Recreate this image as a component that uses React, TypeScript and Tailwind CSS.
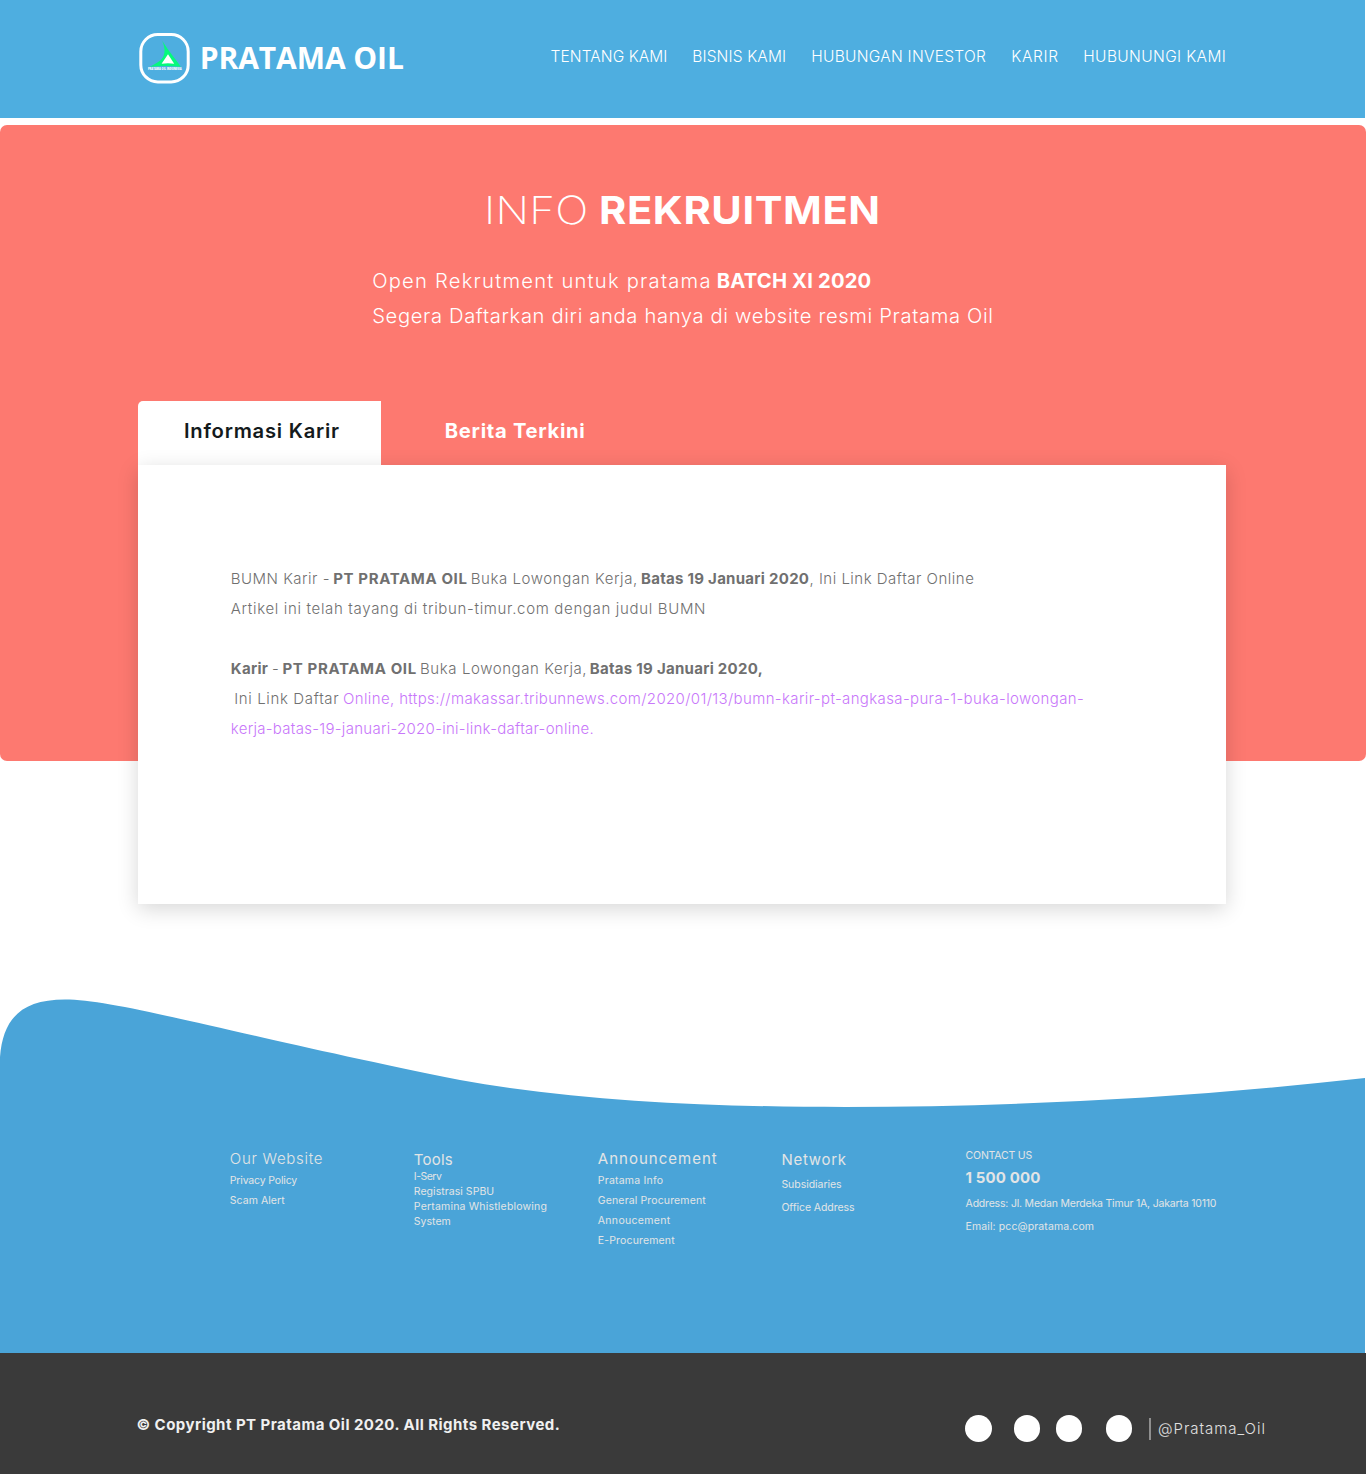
import React from "react";

function Logo() {
  return (
    <svg width="52" height="52" viewBox="0 0 52 52" className="block shrink-0">
      <rect x="2.800" y="2.500" width="47.400" height="47.400" rx="17" fill="none" stroke="#fff" strokeWidth="3" />
      <path
        d="M24 8.5C27.5 14 31 19 34.5 23.5C37.5 27.5 40.5 31 42.700 34.800Q27 33.300 11.500 34.800C18 32 23.500 28.500 25.500 24C27.500 19 26.500 14 24 8.500Z"
        fill="#05f97c"
      />
      <path d="M30 22.3L36.2 31.8Q30 30.8 23.6 31.8Z" fill="#fff" />
      <text
        x="10"
        y="38"
        textLength="33.5"
        lengthAdjust="spacingAndGlyphs"
        fill="#fff"
        className="font-['Open_Sans',sans-serif] text-[3px] font-extrabold"
      >
        PRATAMA OIL INDONESIA
      </text>
    </svg>
  );
}

function Header() {
  return (
    <header className="flex h-[118px] w-[1365px] items-start bg-[#4eaee0] pl-[138px] text-white">
      <a className="mt-[32px] flex w-[412.6px] items-start">
        <Logo />
        <span className="ml-[9.7px] mt-[5px] whitespace-nowrap font-['Open_Sans',sans-serif] text-[30px] font-bold leading-[42px] tracking-[-0.07px]">
          PRATAMA OIL
        </span>
      </a>
      <nav className="mt-[46px] grid grid-cols-[141.7px_119px_200px_72px_auto] whitespace-nowrap text-[15.5px] font-light leading-[22px]">
        <a className="tracking-[0.08px]">TENTANG KAMI</a>
        <a className="tracking-[0.14px]">BISNIS KAMI</a>
        <a className="tracking-[0.27px]">HUBUNGAN INVESTOR</a>
        <a className="tracking-[0.65px]">KARIR</a>
        <a className="tracking-[0.37px]">HUBUNUNGI KAMI</a>
      </nav>
    </header>
  );
}

function Article() {
  return (
    <article className="relative h-[439px] w-[1088px] whitespace-nowrap bg-white pl-[92.8px] pt-[99px] text-[15px] font-light leading-[30px] text-[#707070] shadow-[0_5px_20px_rgba(0,0,0,0.16)]">
      <p className="flex">
        <span className="tracking-[0.49px]">BUMN Karir -</span>
        <b className="ml-[3.2px] font-bold tracking-[0.63px]">PT PRATAMA OIL</b>
        <span className="ml-[3.1px] tracking-[0.59px]">Buka Lowongan Kerja,</span>
        <b className="ml-[3.1px] font-bold tracking-[0.28px]">Batas 19 Januari 2020</b>
        <span className="ml-[0.2px] tracking-[0.5px]">, Ini Link Daftar Online</span>
      </p>
      <p className="tracking-[0.665px]">Artikel ini telah tayang di tribun-timur.com dengan judul BUMN</p>
      <p className="mt-[30px] flex">
        <b className="font-bold tracking-[0.303px]">Karir</b>
        <span className="w-[14.2px] text-center">-</span>
        <b className="font-bold tracking-[0.63px]">PT PRATAMA OIL</b>
        <span className="ml-[3.2px] tracking-[0.59px]">Buka Lowongan Kerja,</span>
        <b className="ml-[2.6px] font-bold tracking-[0.28px]">Batas 19 Januari 2020,</b>
      </p>
      <p className="ml-[3.4px] flex">
        <span className="tracking-[0.64px]">Ini Link Daftar</span>
        <a className="ml-[3.8px] tracking-[0.364px] text-[#c877fa]">
          Online, https://makassar.tribunnews.com/2020/01/13/bumn-karir-pt-angkasa-pura-1-buka-lowongan-
        </a>
      </p>
      <p>
        <a className="tracking-[0.28px] text-[#c877fa]">kerja-batas-19-januari-2020-ini-link-daftar-online.</a>
      </p>
    </article>
  );
}

function Hero() {
  return (
    <main className="mt-[7px] h-[636px] rounded-[7px] bg-[#fd7970] pt-[61px] text-white">
      <h1 className="ml-[484px] flex whitespace-nowrap text-[38.5px] leading-[48px]">
        <span className="origin-left scale-x-[1.14] font-extralight tracking-[0.2px]">INFO</span>
        <b className="ml-[23.7px] origin-left scale-x-[1.08] font-bold tracking-[0.59px]">REKRUITMEN</b>
      </h1>
      <div className="ml-[372.2px] mt-[29px] whitespace-nowrap text-[20.2px] font-light leading-[35px]">
        <p className="flex">
          <span className="w-[344.6px] tracking-[1.22px]">Open Rekrutment untuk pratama</span>
          <b className="font-bold tracking-[0.18px]">BATCH XI 2020</b>
        </p>
        <p className="tracking-[0.635px]">Segera Daftarkan diri anda hanya di website resmi Pratama Oil</p>
      </div>
      <div className="ml-[138px] mt-[67.5px]">
        <div className="flex whitespace-nowrap text-[20.2px] leading-[24px]">
          <button className="flex h-[64.5px] w-[243px] rounded-tl-[5px] bg-white pl-[46px] pt-[18.5px] font-semibold leading-[24px] tracking-[0.77px] text-[#141a1c]">
            Informasi Karir
          </button>
          <button className="flex pl-[63.8px] pt-[18.5px] font-bold leading-[24px] tracking-[0.7px]">Berita Terkini</button>
        </div>
        <Article />
      </div>
    </main>
  );
}

function FooterLinks() {
  return (
    <div className="h-[242px] w-[1365px] bg-[#4aa4d8] pl-[229.8px] pt-[33px]">
      <div className="grid grid-cols-[184px_184px_183.6px_184.2px_auto] items-start whitespace-nowrap text-[10.5px] text-[#e2e4e6]">
        <section className="mt-[4px] leading-[20px]">
          <h2 className="mb-px text-[15px] font-light leading-[22px] tracking-[0.72px]">Our Website</h2>
          <p className="tracking-[-0.16px]">Privacy Policy</p>
          <p className="tracking-[0.054px]">Scam Alert</p>
        </section>
        <section className="mt-[7px] leading-[15px]">
          <h2 className="text-[15px] leading-[18px] tracking-[0.2px]">Tools</h2>
          <p className="tracking-[-0.485px]">I-Serv</p>
          <p className="tracking-[0.044px]">Registrasi SPBU</p>
          <p className="tracking-[0.195px]">Pertamina Whistleblowing</p>
          <p className="tracking-[0.033px]">System</p>
        </section>
        <section className="mt-[4px] leading-[20px]">
          <h2 className="mb-px text-[15px] leading-[22px] tracking-[1.01px]">Announcement</h2>
          <p className="tracking-[0.21px]">Pratama Info</p>
          <p className="tracking-[0.137px]">General Procurement</p>
          <p className="tracking-[0.31px]">Annoucement</p>
          <p className="tracking-[0.154px]">E-Procurement</p>
        </section>
        <section className="mt-[5px] leading-[23px]">
          <h2 className="mb-[2px] text-[15px] leading-[22px] tracking-[0.72px]">Network</h2>
          <p className="tracking-[-0.037px]">Subsidiaries</p>
          <p className="tracking-[-0.081px]">Office Address</p>
        </section>
        <section className="mt-px leading-[23px]">
          <h2 className="leading-[22px] tracking-[-0.199px]">CONTACT US</h2>
          <p className="mb-[2px] -mt-px text-[15px] font-bold leading-[24px] tracking-[0.12px]">1 500 000</p>
          <p className="tracking-[-0.195px]">Address: Jl. Medan Merdeka Timur 1A, Jakarta 10110</p>
          <p className="tracking-[0.104px]">Email: pcc@pratama.com</p>
        </section>
      </div>
    </div>
  );
}

function BottomBar() {
  return (
    <div className="flex h-[121px] items-start whitespace-nowrap bg-[#3a3a3a] pl-[136.4px] text-[15px] leading-[22px]">
      <p className="mt-[61px] w-[828.6px] font-bold tracking-[0.465px] text-[#f0f0f0]">
        © Copyright PT Pratama Oil 2020. All Rights Reserved.
      </p>
      <div className="mt-[61.5px] flex h-[27px] items-center">
        <span className="h-[27px] w-[27px] rounded-full bg-white" />
        <span className="ml-[22px] h-[27px] w-[26px] rounded-full bg-white" />
        <span className="ml-[16px] h-[27px] w-[26px] rounded-full bg-white" />
        <span className="ml-[24px] h-[27px] w-[26px] rounded-full bg-white" />
        <span className="ml-[17px] mt-[2px] h-[22px] w-[2px] bg-[#8f8f8f]" />
        <a className="ml-[7.1px] mt-[2px] font-light tracking-[0.96px] text-[#e0e0e0]">@Pratama_Oil</a>
      </div>
    </div>
  );
}

export default function App() {
  return (
    <div className="h-[1474px] w-[1366px] overflow-hidden bg-white font-['Inter',sans-serif]">
      <Header />
      <Hero />
      <footer className="mt-[229px]">
        <svg width="1365" height="121" viewBox="0 990 1365 121" className="block">
          <path
            d="M0 1057C3 1018 22 999.5 65 999.5C119 999.5 240 1036 460 1080C580 1101.500 720 1107 845 1107C1020 1107 1195 1097 1365 1078V1111H0Z"
            fill="#4aa4d8"
          />
        </svg>
        <FooterLinks />
        <BottomBar />
      </footer>
    </div>
  );
}
